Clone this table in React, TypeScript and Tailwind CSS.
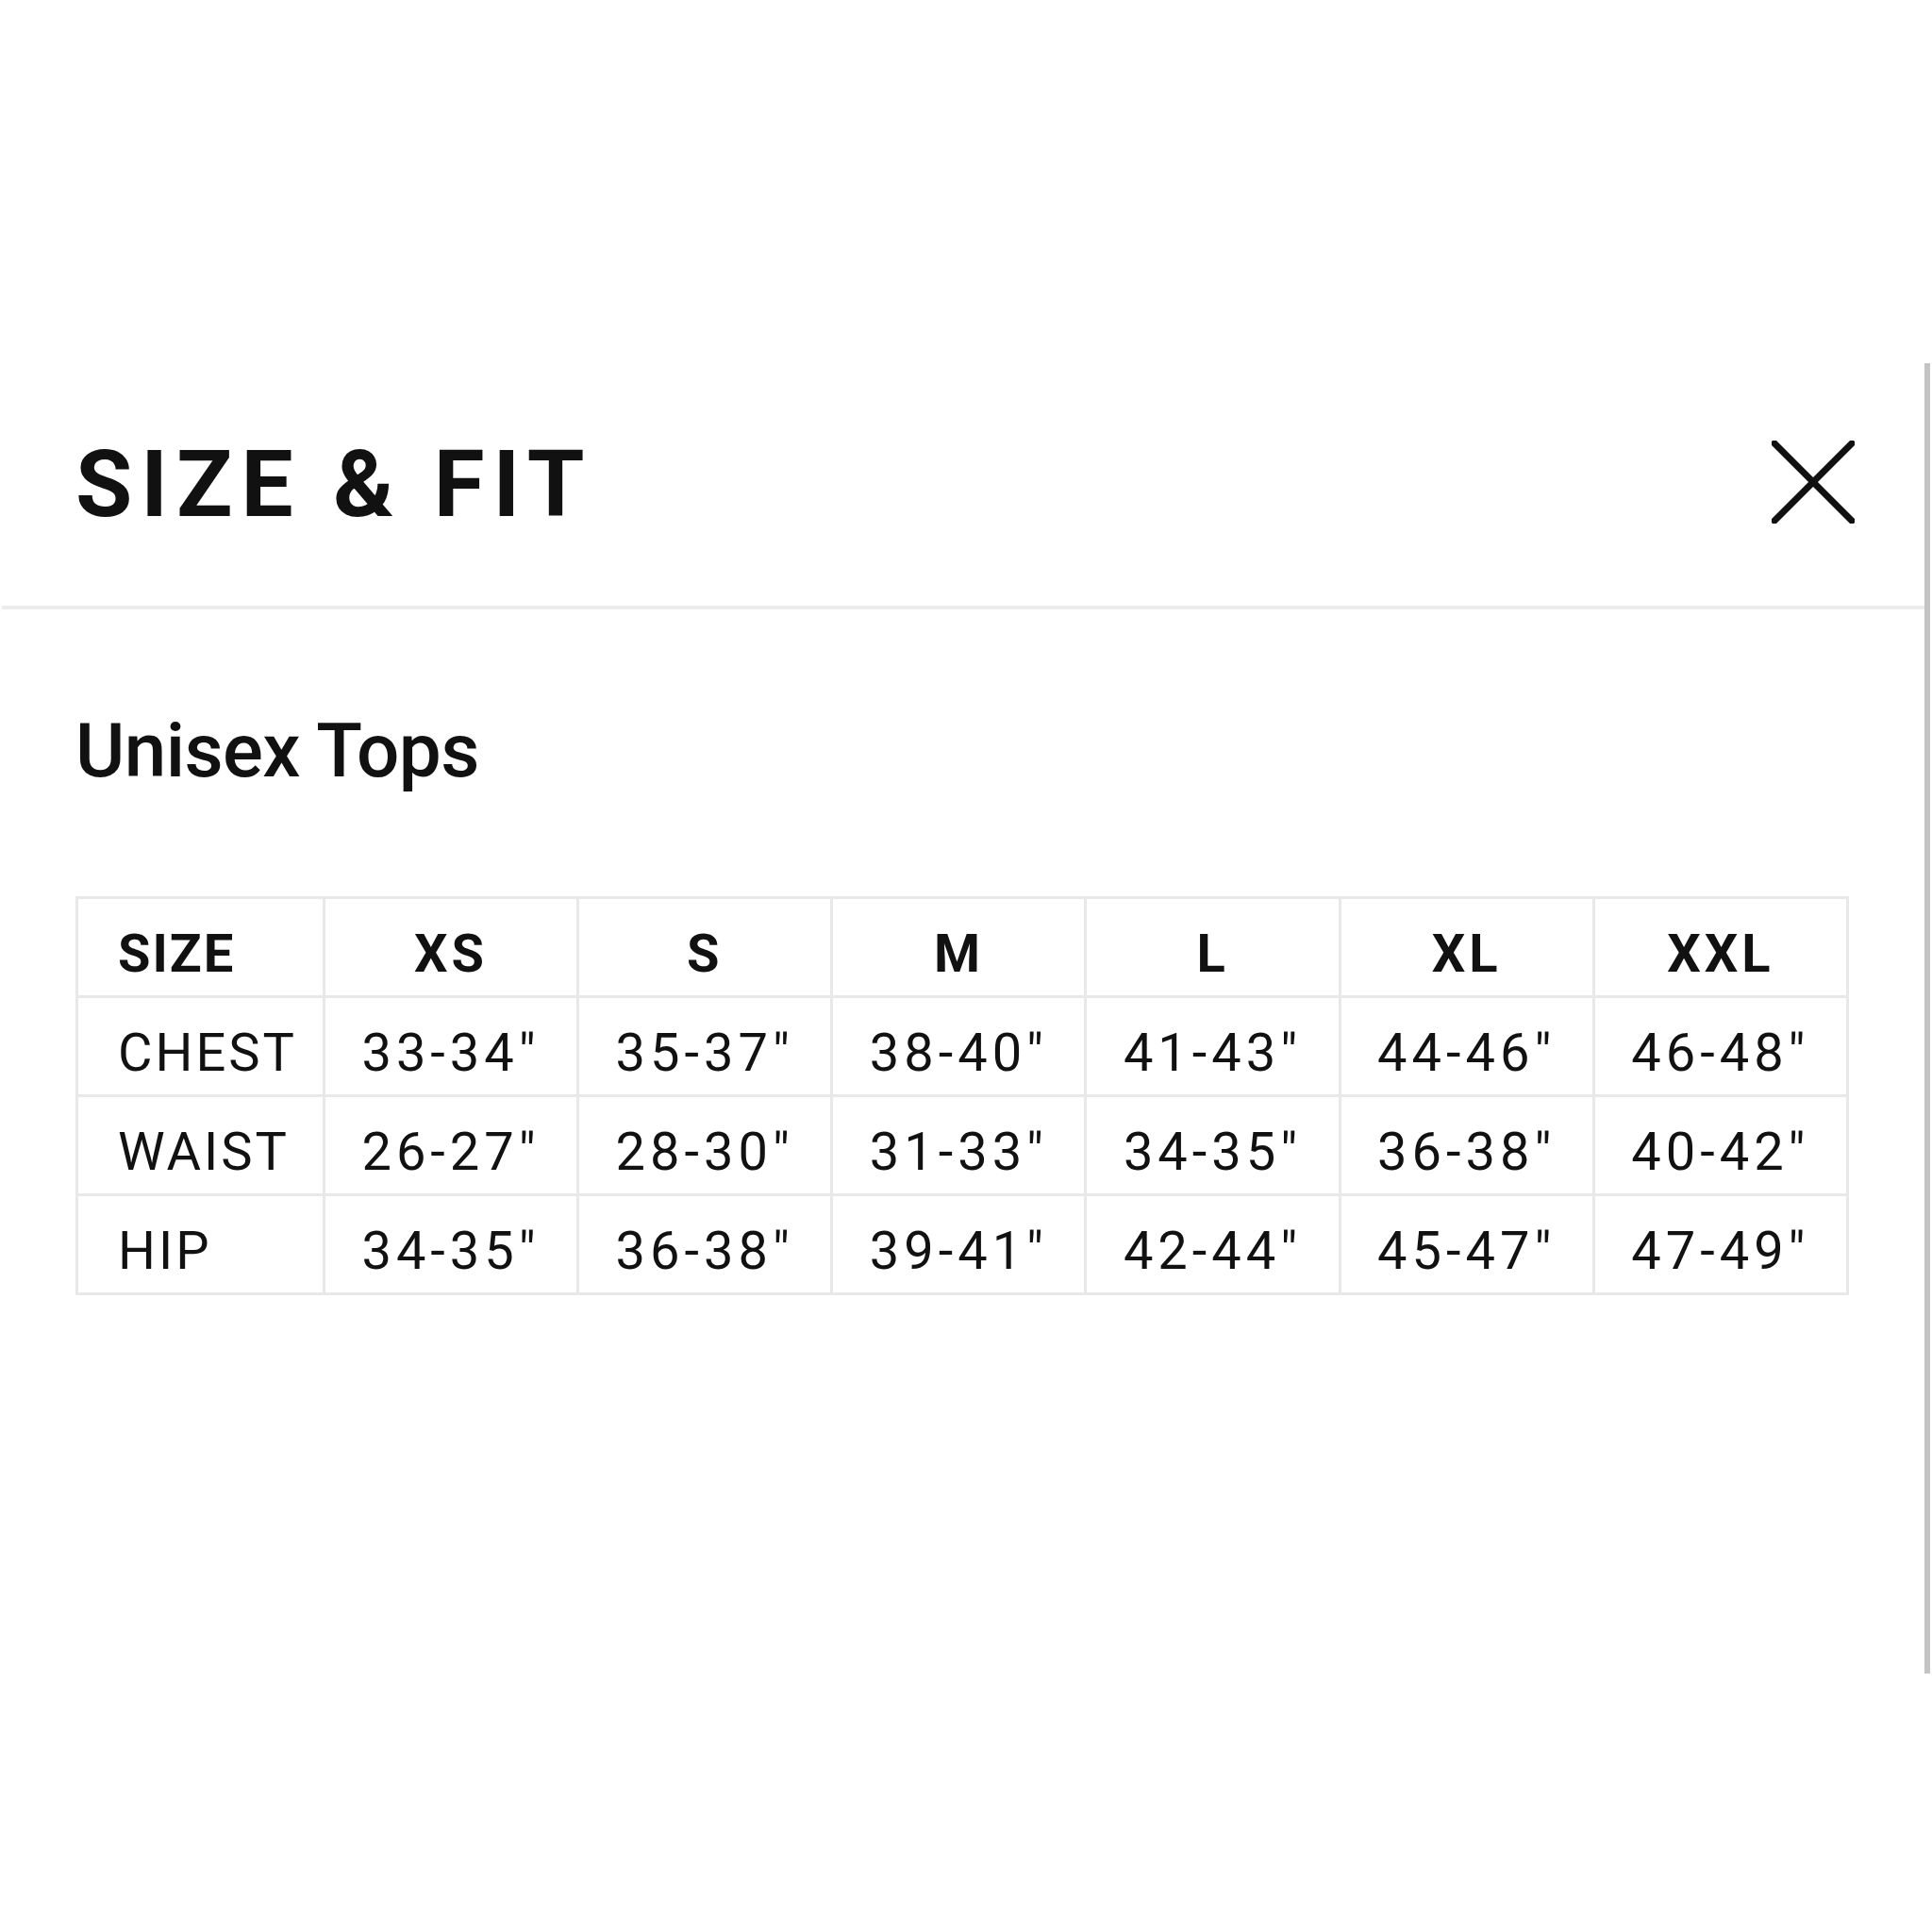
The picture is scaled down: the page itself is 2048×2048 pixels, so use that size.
import React from "react";

const sizes = ["XS", "S", "M", "L", "XL", "XXL"];

const rows: { label: string; values: string[] }[] = [
  { label: "CHEST", values: ['33-34"', '35-37"', '38-40"', '41-43"', '44-46"', '46-48"'] },
  { label: "WAIST", values: ['26-27"', '28-30"', '31-33"', '34-35"', '36-38"', '40-42"'] },
  { label: "HIP", values: ['34-35"', '36-38"', '39-41"', '42-44"', '45-47"', '47-49"'] },
];

function CloseIcon() {
  return (
    <svg width="88" height="88" viewBox="0 0 88 88" fill="none">
      <path d="M3 3 L85 85 M85 3 L3 85" stroke="#111" strokeWidth="7" strokeLinecap="square" />
    </svg>
  );
}

export default function App() {
  return (
    <div className="min-h-screen w-[2048px] bg-white pt-[385px] text-[#111] font-['Roboto',sans-serif]">
      {/* Drawer panel */}
      <div className="h-[1389px] w-[2046px] border-r-[6px] border-[#c4c4c4]">
        {/* Header */}
        <div className="ml-[2px] flex h-[261px] items-center justify-between border-b-[4px] border-[#ececec] pl-[78px] pr-[74px]">
          <h1 className="text-[98px] font-bold leading-none tracking-[9px]">SIZE &amp; FIT</h1>
          <button className="mb-[6px] flex items-center justify-center">
            <CloseIcon />
          </button>
        </div>

        <div className="px-[80px] pt-[110px]">
          <h2 className="text-[80px] font-medium leading-none tracking-[-0.6px]">Unisex Tops</h2>

          <table className="mt-[114px] w-[1880px] table-fixed border-collapse border-[3px] border-[#e8e8e8]">
            <thead>
              <tr className="h-[105px]">
                <th className="w-[262px] border-[3px] border-[#e8e8e8] pl-[42px] pt-[14px] text-left text-[56px] font-bold tracking-[2px]">
                  SIZE
                </th>
                {sizes.map((s) => (
                  <th key={s} className="border-[3px] border-[#e8e8e8] pt-[14px] text-center text-[56px] font-bold tracking-[4px]">
                    {s}
                  </th>
                ))}
              </tr>
            </thead>
            <tbody>
              {rows.map((r) => (
                <tr key={r.label} className="h-[105px]">
                  <td className="border-[3px] border-[#e8e8e8] pl-[42px] pt-[14px] text-left text-[56px] tracking-[3px]">
                    {r.label}
                  </td>
                  {r.values.map((v, i) => (
                    <td key={i} className="border-[3px] border-[#e8e8e8] pt-[14px] text-center text-[56px] tracking-[5px]">
                      {v}
                    </td>
                  ))}
                </tr>
              ))}
            </tbody>
          </table>
        </div>
      </div>
    </div>
  );
}
